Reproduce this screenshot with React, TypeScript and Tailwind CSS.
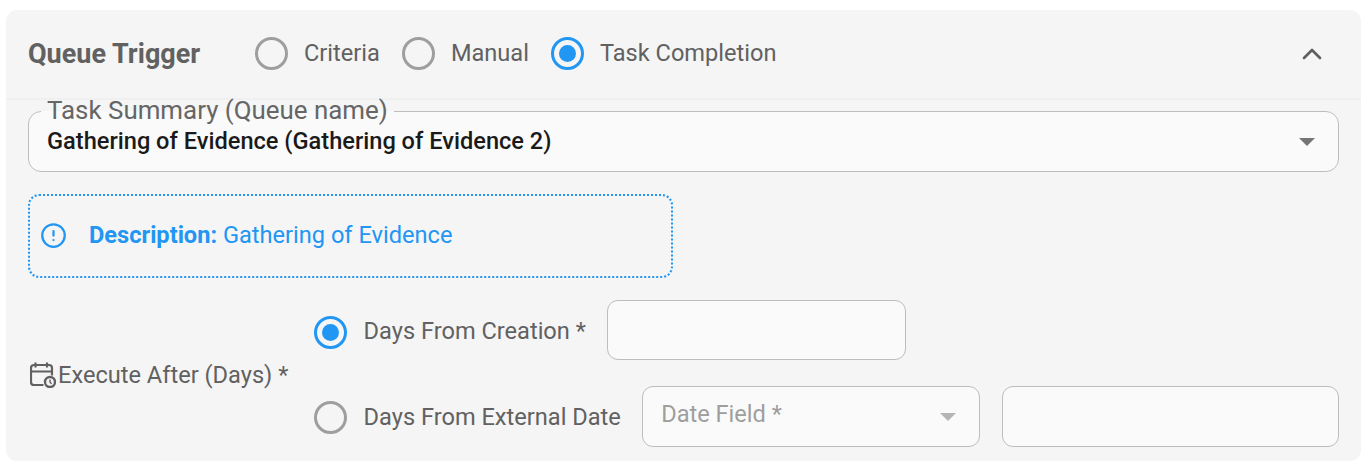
import React from 'react';
import { ChevronUp, CircleAlert } from 'lucide-react';

const triggers = [
  { label: 'Criteria', checked: false },
  { label: 'Manual', checked: false },
  { label: 'Task Completion', checked: true },
];

const Radio: React.FC<{ checked?: boolean; className?: string }> = ({ checked, className = '' }) => (
  <span
    className={`flex h-[33px] w-[33px] shrink-0 items-center justify-center rounded-full border-[3.5px] ${
      checked ? 'border-[#2196f3]' : 'border-[#9e9e9e]'
    } ${className}`}
  >
    {checked && <span className="h-[17px] w-[17px] rounded-full bg-[#2196f3]" />}
  </span>
);

const Caret: React.FC<{ className: string }> = ({ className }) => (
  <svg viewBox="0 0 16 8" className={className} fill="currentColor">
    <path d="M0 0h16L8 8z" />
  </svg>
);

const CalendarTimer: React.FC = () => (
  <svg viewBox="0 0 26 26" className="h-[26px] w-[26px] shrink-0 text-[#616161]" fill="none" stroke="currentColor" strokeWidth={2.2}>
    <path d="M13.5 23H4a3 3 0 0 1-3-3V6a3 3 0 0 1 3-3h15a3 3 0 0 1 3 3v7.5" />
    <path d="M5.5 0.5v5M17 0.5v5M1 9.5h21" />
    <circle cx="20" cy="20" r="5" strokeWidth={2.4} />
    <path d="M20 17.5v2.8l1.6 1.4" strokeWidth={1.4} />
  </svg>
);

const App: React.FC = () => {
  return (
    <div className="h-[475px] w-[1372px] bg-white pl-[6px] pt-[10px] font-['Roboto',sans-serif] text-[23.6px] text-[#616161]">
      <div className="h-[451px] w-[1355px] rounded-[11px] bg-[#f5f5f5]">
        <div className="flex h-[90px] items-center border-b-2 border-[#f0f0f0] pl-[22px] pr-[33px]">
          <h2 className="w-[227px] text-[27px] font-bold">Queue Trigger</h2>
          <div className="flex items-center gap-[22px]">
            {triggers.map((t) => (
              <label key={t.label} className="flex items-center gap-4">
                <Radio checked={t.checked} />
                <span>{t.label}</span>
              </label>
            ))}
          </div>
          <ChevronUp className="ml-auto h-8 w-8 text-[#5f5f5f]" strokeWidth={2} />
        </div>

        <div className="px-[22px]">
          <fieldset className="-mt-[3px] h-[75px] rounded-[13px] border border-[#bdbdbd] bg-[#fafafa] px-[18px]">
            <legend className="relative -top-[1px] -ml-[6px] px-[6px] text-[25.9px] leading-[28px] text-[#666666]">
              Task Summary (Queue name)
            </legend>
            <div className="mt-[2px] flex h-[30px] items-center justify-between">
              <span className="font-medium text-[#1a1a1a]">Gathering of Evidence (Gathering of Evidence 2)</span>
              <Caret className="mr-[5px] h-2 w-4 text-[#757575]" />
            </div>
          </fieldset>

          <div className="mt-[22px] flex h-[84px] w-[645px] items-center rounded-[11px] border-2 border-dotted border-[#2196f3] pl-[10px] text-[#2196f3]">
            <CircleAlert className="-mt-[2px] h-[27px] w-[27px]" strokeWidth={2} />
            <p className="ml-[22px]">
              <span className="font-bold">Description:</span> Gathering of Evidence
            </p>
          </div>

          <div className="mt-[22px] flex items-center">
            <div className="mt-1 flex w-[286px] shrink-0 items-center pl-[2px]">
              <CalendarTimer />
              <span className="ml-[2px] whitespace-nowrap">Execute After (Days) *</span>
            </div>
            <div className="flex flex-col gap-[26px]">
              <div className="flex items-center">
                <Radio checked className="mt-1" />
                <span className="ml-[16.6px] mr-[21.4px] mt-1 whitespace-nowrap">Days From Creation *</span>
                <div className="h-[60px] w-[299px] shrink-0 rounded-[11px] border border-[#bdbdbd] bg-[#fafafa]" />
              </div>
              <div className="flex items-center">
                <Radio className="mt-[2px]" />
                <span className="ml-[16.6px] mr-[21.4px] mt-[2px] whitespace-nowrap">Days From External Date</span>
                <div className="flex h-[61px] w-[338px] shrink-0 items-center justify-between rounded-[11px] border border-[#bdbdbd] bg-[#fafafa] pl-[18px] pr-[22px]">
                  <span className="relative -top-[2px] text-[#9e9e9e]">Date Field *</span>
                  <Caret className="h-2 w-[18px] text-[#b5b5b5]" />
                </div>
                <div className="ml-[22px] h-[61px] w-[337px] shrink-0 rounded-[11px] border border-[#bdbdbd] bg-[#fafafa]" />
              </div>
            </div>
          </div>
        </div>
      </div>
    </div>
  );
};

export default App;
